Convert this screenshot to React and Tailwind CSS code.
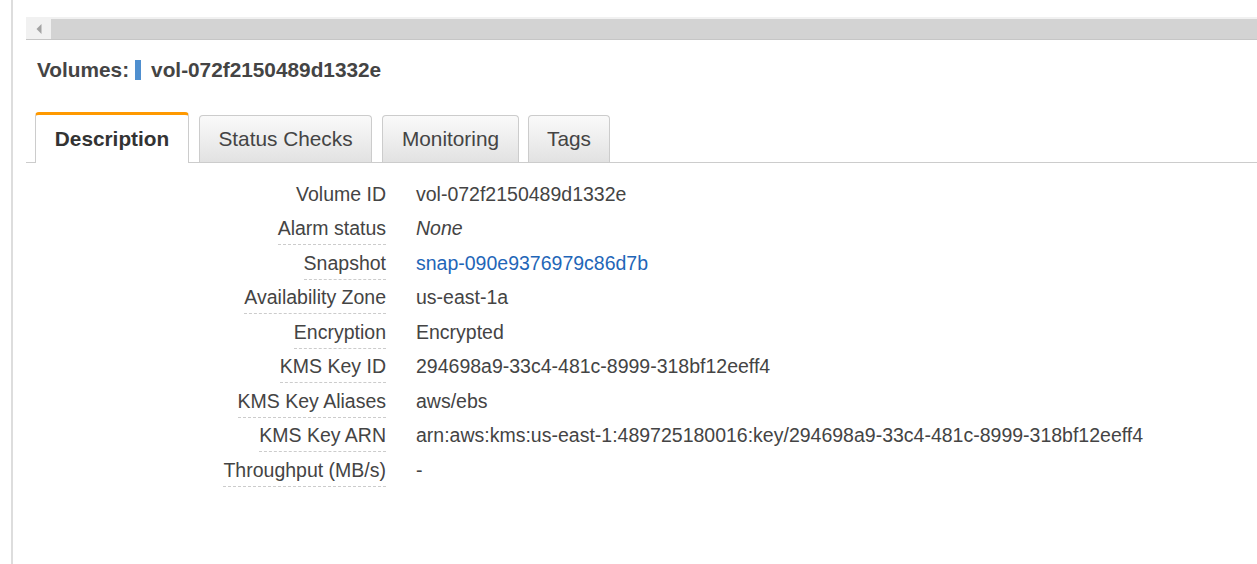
import React from "react";

const rows = [
  { label: "Volume ID", value: "vol-072f2150489d1332e", dashed: false },
  { label: "Alarm status", value: "None", italic: true },
  { label: "Snapshot", value: "snap-090e9376979c86d7b", link: true },
  { label: "Availability Zone", value: "us-east-1a" },
  { label: "Encryption", value: "Encrypted" },
  { label: "KMS Key ID", value: "294698a9-33c4-481c-8999-318bf12eeff4" },
  { label: "KMS Key Aliases", value: "aws/ebs" },
  { label: "KMS Key ARN", value: "arn:aws:kms:us-east-1:489725180016:key/294698a9-33c4-481c-8999-318bf12eeff4" },
  { label: "Throughput (MB/s)", value: "-" },
];

function Tab({ children, active, className = "" }) {
  if (active) {
    return (
      <div className={"h-[51px] -mb-px flex items-center justify-center bg-white border-t-[3px] border-[#ff9900] border-x border-x-[#cccccc] rounded-t-[4px] font-bold text-[20.8px] text-[#333333] " + className}>
        {children}
      </div>
    );
  }
  return (
    <div className={"h-[47px] flex items-center justify-center border border-b-0 border-[#cccccc] rounded-t-[4px] bg-gradient-to-b from-[#fafafa] to-[#e2e2e2] text-[20.8px] text-[#444444] " + className}>
      {children}
    </div>
  );
}

export default function App() {
  return (
    <div
      className="w-[1257px] h-[564px] bg-white overflow-hidden flex"
      style={{ fontFamily: '"Liberation Sans", Arial, sans-serif' }}
    >
      <div className="w-[11px] shrink-0" />
      <div className="w-[2px] shrink-0 bg-[#dddddd]" />
      <div className="flex-1 ml-[13px] flex flex-col min-w-0">
        {/* scrollbar */}
        <div className="mt-[17px] h-[23px] flex border-t-2 border-[#f1f1f1] border-b border-b-[#c6c6c6]">
          <div className="w-[25px] bg-[#f1f1f1] flex items-center justify-center">
            <svg width="6" height="10" viewBox="0 0 6 10">
              <polygon points="5.5,0 5.5,10 0.5,5" fill="#a3a3a3" />
            </svg>
          </div>
          <div className="flex-1 bg-[#d3d3d3]" />
        </div>

        {/* heading */}
        <div className="mt-[18px] pl-[11px] h-[24px] flex items-center text-[20.8px] font-bold text-[#444444] leading-[24px]">
          <span>Volumes:</span>
          <span className="ml-[6px] w-[6px] h-[20px] bg-[#4f8fcf]" />
          <span className="ml-[10px]">vol-072f2150489d1332e</span>
        </div>

        {/* tabs */}
        <div className="mt-[31px] h-[50px] pl-[9px] flex items-end border-b border-[#cccccc]">
          <Tab active className="w-[154px]">Description</Tab>
          <Tab className="w-[173px] ml-[10px]">Status Checks</Tab>
          <Tab className="w-[137px] ml-[10px]">Monitoring</Tab>
          <Tab className="w-[82px] ml-[9px]">Tags</Tab>
        </div>

        {/* details */}
        <div className="mt-[13.5px] flex flex-col text-[19.5px] leading-[22px] text-[#444444]">
          {rows.map((r) => (
            <div key={r.label} className="h-[34.5px] pt-[6px] flex items-start">
              <div className="w-[360px] text-right shrink-0">
                <span
                  className={
                    r.dashed === false
                      ? "inline-block pb-[6px]"
                      : "inline-block pb-[5px] border-b border-dashed border-[#cccccc]"
                  }
                >
                  {r.label}
                </span>
              </div>
              <div
                className={
                  "ml-[30px] whitespace-nowrap " +
                  (r.italic ? "italic " : "") +
                  (r.link ? "text-[#1f66b8]" : "")
                }
              >
                {r.value}
              </div>
            </div>
          ))}
        </div>
      </div>
    </div>
  );
}
